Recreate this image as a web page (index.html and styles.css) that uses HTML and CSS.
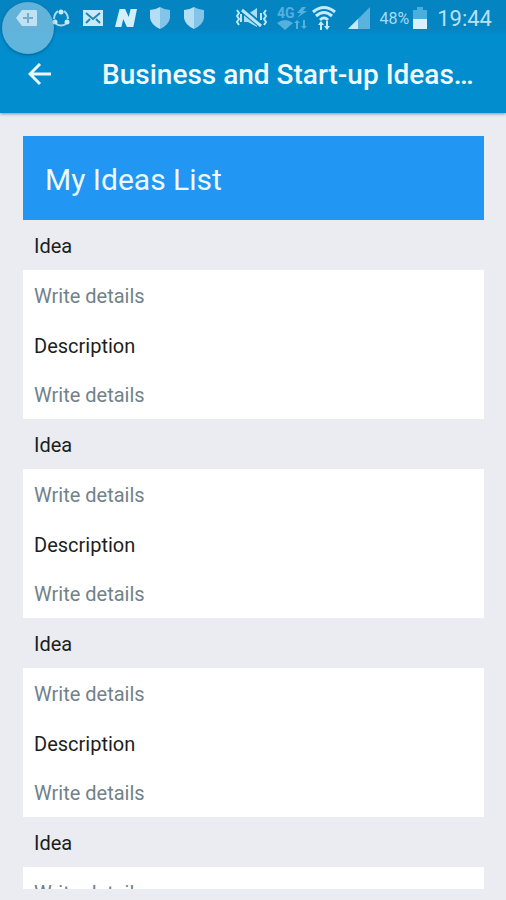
FILE: index.html
```html
<!DOCTYPE html>
<html lang="en">
<head>
<meta charset="utf-8">
<meta name="viewport" content="width=device-width, initial-scale=1">
<title>My Ideas List</title>
<link rel="stylesheet" href="styles.css">
</head>
<body>
<header class="top">
  <div class="status">
    <div class="status-group notifications">
      <svg width="24" height="20" viewBox="0 0 24 20"><path d="M1 10 7 2H21q1 0 1 1V17q0 1-1 1H7Z" fill="#f0fbff"/><path d="M13 5V15M8 10H18" stroke="#2b7ca8" stroke-width="2"/></svg>
      <svg width="20" height="20" viewBox="0 0 20 20"><g fill="none" stroke="#a9dcf3" stroke-width="2"><path d="M7 3Q3 6 3 11M13 3Q17 6 17 11M5 16Q10 19 15 16"/></g><g fill="#c8ebf9"><circle cx="10" cy="4" r="2.5"/><circle cx="4" cy="14" r="2.5"/><circle cx="16" cy="14" r="2.5"/></g></svg>
      <svg width="20" height="20" viewBox="0 0 20 20"><path d="M0 2H20V18H0Z" fill="#c8ebfa"/><path d="M3 5 10 11 17 5M3 15 7 11M17 15 13 11" fill="none" stroke="#2585b5" stroke-width="2"/></svg>
      <svg width="22" height="20" viewBox="0 0 24 20" preserveAspectRatio="none"><path d="M5 1H11L15 9 17 1H24L20 19H13L9 11 7 19H0Z" fill="#d3effb"/></svg>
      <svg width="22" height="24" viewBox="0 0 22 24"><path d="M11 1Q6 4 1 4V12Q2 19 11 23Z" fill="#b5def4"/><path d="M11 1Q16 4 21 4V12Q20 19 11 23Z" fill="#83c4e8"/></svg>
      <svg width="22" height="24" viewBox="0 0 22 24"><path d="M11 1Q6 4 1 4V12Q2 19 11 23Z" fill="#b5def4"/><path d="M11 1Q16 4 21 4V12Q20 19 11 23Z" fill="#83c4e8"/></svg>
    </div>
    <div class="status-group system">
      <svg width="34" height="22" viewBox="0 0 34 22"><path d="M9 7H13L22 1V20L13 15H9Z" fill="#a9ddf4"/><path d="M7 3 27 19" stroke="#087fbb" stroke-width="6"/><path d="M7 3 26 19" stroke="#bce7f8" stroke-width="3"/><path d="M2 3 4 6 2 9 4 12 2 15 4 18M6 7V15M31 3 29 6 31 9 29 12 31 15 29 18M26 6V13" fill="none" stroke="#bce7f8" stroke-width="2"/></svg>
      <svg class="network" width="30" height="26" viewBox="0 0 30 26" fill="#55b0dc"><text x="0" y="13" class="network-text">4G</text><path d="M25 2H29L26 6H30L20 13 24 8H20Z"/><path d="M0 18Q8 12 16 18L8 25Z"/><path d="M20 15 23 18H21V24H19V18H17ZM27 24 24 21H26V15H28V21H30Z"/></svg>
      <svg width="24" height="26" viewBox="0 0 24 26"><g fill="none" stroke="#c4ebfa" stroke-width="3"><path d="M1 7Q12-2 23 7M4 11Q12 4 20 11M8 15Q12 11 16 15"/></g><path d="M9 16 12 20H10V25H8V20H6ZM15 25 12 21H14V16H16V21H18Z" fill="#c4ebfa"/></svg>
      <svg class="signal" width="22" height="22" viewBox="0 0 22 22"><path d="M0 22 22 0V22Z" fill="#59b2df"/><path d="M0 22 10 12V22Z" fill="#c3eafa"/></svg>
      <span class="battery-level">48%</span>
      <svg class="battery" width="14" height="22" viewBox="0 0 14 22"><path d="M0 3H4V0H10V3H14V12H0Z" fill="#4caedb"/><path d="M0 12H14V22H0Z" fill="#d9f1fb"/></svg>
      <time class="clock">19:44</time>
    </div>
    <div class="touch-bubble"></div>
  </div>
  <div class="app-bar">
    <button class="back" type="button" aria-label="Back"><svg width="24" height="24" viewBox="0 0 24 24"><path d="M23 11H2M12 1 2 11 12 21" fill="none" stroke="#e9f8fe" stroke-width="3"/></svg></button>
    <h1 class="title">Business and Start-up Ideas…</h1>
  </div>
</header>
<main class="page">
  <form class="list">
    <h2 class="list-title">My Ideas List</h2>
    <label class="label" for="idea-1">Idea</label>
    <input class="field" id="idea-1" type="text" placeholder="Write details">
    <label class="label label-inner" for="desc-1">Description</label>
    <input class="field" id="desc-1" type="text" placeholder="Write details">
    <label class="label" for="idea-2">Idea</label>
    <input class="field" id="idea-2" type="text" placeholder="Write details">
    <label class="label label-inner" for="desc-2">Description</label>
    <input class="field" id="desc-2" type="text" placeholder="Write details">
    <label class="label" for="idea-3">Idea</label>
    <input class="field" id="idea-3" type="text" placeholder="Write details">
    <label class="label label-inner" for="desc-3">Description</label>
    <input class="field" id="desc-3" type="text" placeholder="Write details">
    <label class="label" for="idea-4">Idea</label>
    <input class="field" id="idea-4" type="text" placeholder="Write details">
  </form>
</main>
</body>
</html>
```
FILE: styles.css
```css
* {
  box-sizing: border-box;
}

body {
  margin: 0;
  height: 100vh;
  display: flex;
  flex-direction: column;
  overflow: hidden;
  background: #eaecf1;
  font-family: Roboto, "Liberation Sans", sans-serif;
  color: #1c1e20;
}

svg {
  display: block;
  flex: none;
}

.top {
  flex: none;
  position: relative;
  background: #028dce;
  box-shadow: 0 1px 3px rgba(0, 0, 0, 0.4);
}

.status {
  position: relative;
  display: flex;
  align-items: center;
  justify-content: space-between;
  height: 36px;
  padding: 0 14px 0 15px;
  background: linear-gradient(#0584c2 80%, #028dce);
}

.status-group {
  display: flex;
  align-items: center;
}

.notifications {
  gap: 12px;
}

.system {
  gap: 8px;
}

.network {
  margin-right: -3px;
  overflow: visible;
}

.network-text {
  font-size: 14px;
  font-weight: 700;
}

.signal {
  margin: 0 2px 0 4px;
}

.battery-level {
  font-size: 16px;
  color: #a5dcf4;
}

.battery {
  margin: 0 2px 0 -4px;
}

.clock {
  font-size: 22px;
  color: #b5e2f6;
}

.touch-bubble {
  position: absolute;
  top: 2px;
  left: 2px;
  width: 52px;
  height: 52px;
  border-radius: 50%;
  background: rgba(160, 209, 232, 0.6);
  box-shadow: 0 1px 3px rgba(0, 50, 80, 0.5);
}

.app-bar {
  display: flex;
  align-items: center;
  height: 77px;
  padding: 0 28px;
  gap: 50px;
}

.back {
  padding: 0;
  border: 0;
  background: none;
}

.title {
  margin: 0;
  min-width: 0;
  overflow: hidden;
  white-space: nowrap;
  font-size: 28px;
  font-weight: 500;
  line-height: 36px;
  color: #f1faff;
}

.page {
  flex: 1;
  min-height: 0;
  display: flex;
  padding: 23px 22px 11px 23px;
}

.list {
  flex: 1;
  min-width: 0;
  overflow: hidden;
}

.list-title {
  margin: 0;
  padding: 4px 22px 0;
  background: #2196f3;
  color: #edf8ff;
  font-size: 30px;
  font-weight: 400;
  line-height: 80px;
}

.label,
.field {
  display: block;
  width: 100%;
  height: 50px;
  padding: 2px 11px 0;
  font: 400 20px/48px Roboto, "Liberation Sans", sans-serif;
}

.label-inner {
  height: 49px;
  background: #fff;
}

.field {
  border: 0;
  border-radius: 0;
  background: #fff;
  color: #1c1e20;
}

.field::placeholder {
  color: #71828a;
  opacity: 1;
}
```
